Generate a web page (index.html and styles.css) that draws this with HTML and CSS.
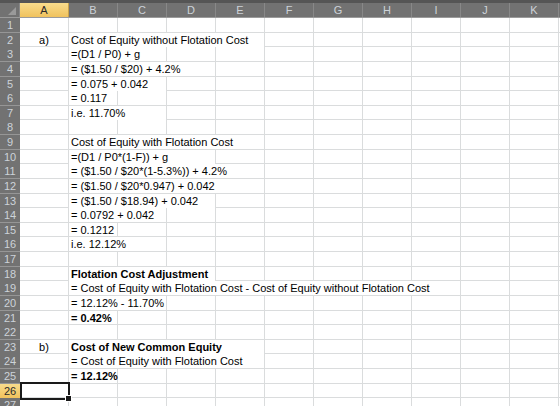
FILE: index.html
```html
<!DOCTYPE html>
<html>
<head>
<meta charset="utf-8">
<link rel="stylesheet" href="styles.css">
</head>
<body>
<div class="sheet">
  <div class="hdr">
    <div class="corner"></div>
    <div class="sel">A</div><div>B</div><div>C</div><div>D</div><div>E</div><div>F</div><div>G</div><div>H</div><div>I</div><div>J</div><div>K</div><div></div>
  </div>
  <div class="row"><div class="rh">1</div></div>
  <div class="row"><div class="rh">2</div><div class="c ctr">a)</div><div class="c s4">Cost of Equity without Flotation Cost</div></div>
  <div class="row"><div class="rh">3</div><div class="c"></div><div class="c s2">=(D1 / P0) + g</div></div>
  <div class="row"><div class="rh">4</div><div class="c"></div><div class="c s3">= ($1.50 / $20) + 4.2%</div></div>
  <div class="row"><div class="rh">5</div><div class="c"></div><div class="c s2">= 0.075 + 0.042</div></div>
  <div class="row"><div class="rh">6</div><div class="c"></div><div class="c">= 0.117</div></div>
  <div class="row"><div class="rh">7</div><div class="c"></div><div class="c s2">i.e. 11.70%</div></div>
  <div class="row"><div class="rh">8</div></div>
  <div class="row"><div class="rh">9</div><div class="c"></div><div class="c s4">Cost of Equity with Flotation Cost</div></div>
  <div class="row"><div class="rh">10</div><div class="c"></div><div class="c s3">=(D1 / P0*(1-F)) + g</div></div>
  <div class="row"><div class="rh">11</div><div class="c"></div><div class="c s4">= ($1.50 / $20*(1-5.3%)) + 4.2%</div></div>
  <div class="row"><div class="rh">12</div><div class="c"></div><div class="c s4">= ($1.50 / $20*0.947) + 0.042</div></div>
  <div class="row"><div class="rh">13</div><div class="c"></div><div class="c s3">= ($1.50 / $18.94) + 0.042</div></div>
  <div class="row"><div class="rh">14</div><div class="c"></div><div class="c s2">= 0.0792 + 0.042</div></div>
  <div class="row"><div class="rh">15</div><div class="c"></div><div class="c">= 0.1212</div></div>
  <div class="row"><div class="rh">16</div><div class="c"></div><div class="c s2">i.e. 12.12%</div></div>
  <div class="row"><div class="rh">17</div></div>
  <div class="row"><div class="rh">18</div><div class="c"></div><div class="c s3 b">Flotation Cost Adjustment</div></div>
  <div class="row"><div class="rh">19</div><div class="c"></div><div class="c s8">= Cost of Equity with Flotation Cost - Cost of Equity without Flotation Cost</div></div>
  <div class="row"><div class="rh">20</div><div class="c"></div><div class="c s2">= 12.12% - 11.70%</div></div>
  <div class="row"><div class="rh">21</div><div class="c"></div><div class="c b">= 0.42%</div></div>
  <div class="row"><div class="rh">22</div></div>
  <div class="row"><div class="rh">23</div><div class="c ctr">b)</div><div class="c s4 b">Cost of New Common Equity</div></div>
  <div class="row"><div class="rh">24</div><div class="c"></div><div class="c s4">= Cost of Equity with Flotation Cost</div></div>
  <div class="row"><div class="rh">25</div><div class="c"></div><div class="c b">= 12.12%</div></div>
  <div class="row"><div class="rh sel">26</div><div class="c active"></div></div>
  <div class="row"><div class="rh">27</div></div>
</div>
</body>
</html>
```
FILE: styles.css
```css
html, body {
  margin: 0;
  padding: 0;
  background: #ffffff;
}
body {
  font-family: "Liberation Sans", Arial, sans-serif;
  font-size: 11px;
  color: #000;
}
.sheet {
  width: 560px;
  height: 406px;
  overflow: hidden;
}
.hdr {
  display: grid;
  grid-template-columns: 20px repeat(12, 49px);
  height: 18px;
  box-sizing: border-box;
  border-top: 3px solid #555555;
  border-bottom: 1px solid #9b9b9b;
  background: #727272;
}
.hdr > div {
  color: #cdd3d9;
  text-align: center;
  line-height: 14px;
  border-right: 1px solid #888888;
}
.hdr > .sel {
  background: linear-gradient(#f9dc8c, #f0c25d);
  color: #2a2a2a;
  border-right-color: #c9a24a;
}
.corner {
  position: relative;
}
.corner::after {
  content: "";
  position: absolute;
  right: 3px;
  bottom: 2px;
  width: 0;
  height: 0;
  border-left: 8px solid transparent;
  border-bottom: 8px solid #9a9a9a;
}
.row {
  display: grid;
  grid-template-columns: 20px repeat(12, 49px);
  height: 14.64px;
  box-sizing: border-box;
  border-bottom: 1px solid #dadcdd;
  background-image: repeating-linear-gradient(to right, transparent 0 48px, #dadcdd 48px 49px);
  background-position: 20px 0;
}
.rh {
  background: #727272;
  color: #cdd3d9;
  text-align: center;
  line-height: 14px;
  box-shadow: 0 1px 0 #969696;
}
.rh.sel {
  background: linear-gradient(#f9dc8c, #f0c25d);
  color: #2a2a2a;
}
.c {
  line-height: 14px;
  padding-left: 2px;
  white-space: nowrap;
  overflow: visible;
  margin-right: 1px;
}
.ctr {
  text-align: center;
  padding-left: 0;
}
.b { font-weight: bold; }
.s2 { grid-column: span 2; background: #fff; }
.s3 { grid-column: span 3; background: #fff; }
.s4 { grid-column: span 4; background: #fff; }
.s8 { grid-column: span 8; background: #fff; }
.active {
  position: relative;
}
.active::before {
  content: "";
  position: absolute;
  left: 0;
  top: -2px;
  right: -2px;
  bottom: -2px;
  border: 2px solid #1a1a1a;
}
.active::after {
  content: "";
  position: absolute;
  right: -4px;
  bottom: -4px;
  width: 5px;
  height: 5px;
  background: #1a1a1a;
  border: 1px solid #fff;
}
```
